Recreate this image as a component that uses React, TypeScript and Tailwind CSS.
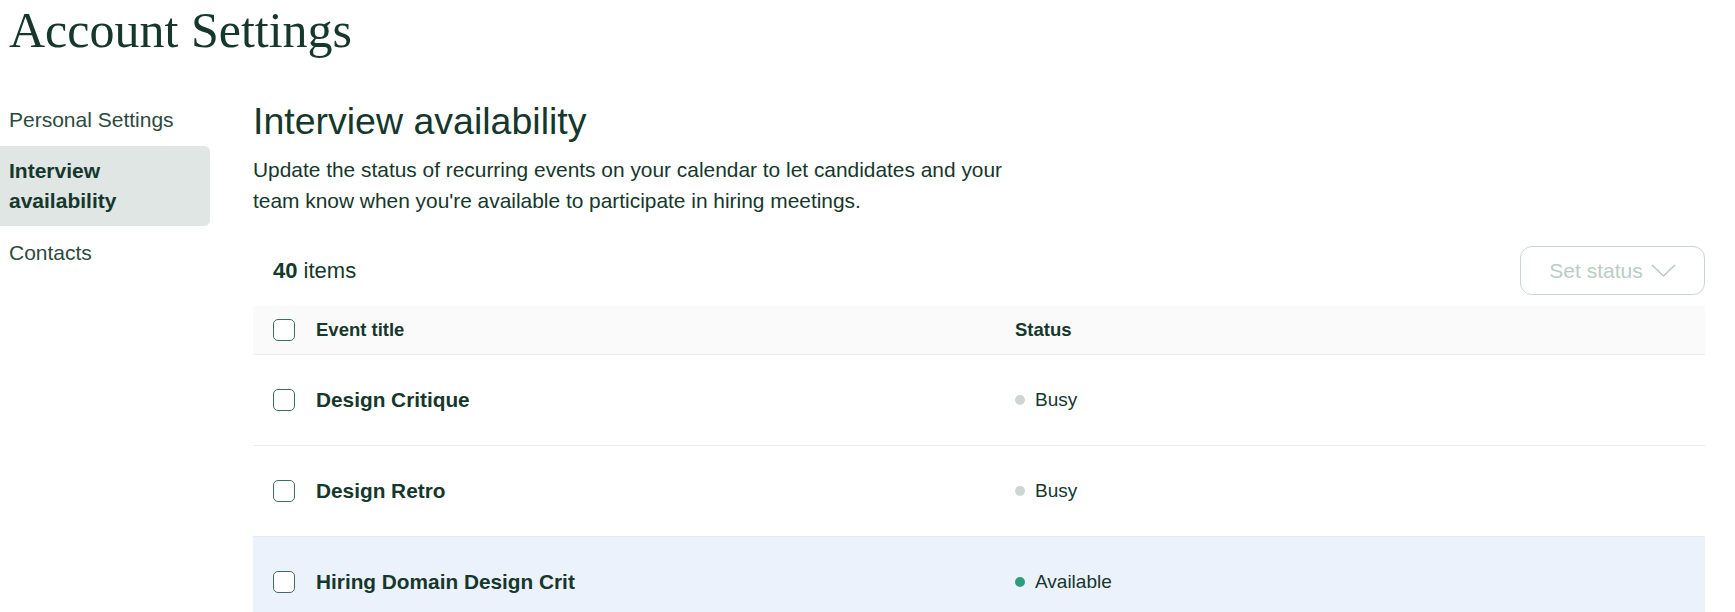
import { ChevronDown } from 'lucide-react';

type EventRow = {
  title: string;
  status: 'Busy' | 'Available';
  highlighted?: boolean;
};

const rows: EventRow[] = [
  { title: 'Design Critique', status: 'Busy' },
  { title: 'Design Retro', status: 'Busy' },
  { title: 'Hiring Domain Design Crit', status: 'Available', highlighted: true },
];

function Checkbox() {
  return (
    <span className="block size-[22px] shrink-0 rounded-[5px] border-[1.5px] border-[#3f6e5f] bg-white" />
  );
}

function StatusCell({ status }: { status: EventRow['status'] }) {
  const available = status === 'Available';
  return (
    <div className="flex items-center gap-[10px] text-[19px]">
      <span
        className={`size-[10px] rounded-full ${available ? 'bg-[#2e9d7c]' : 'bg-[#cfd5d3]'}`}
      />
      <span>{status}</span>
    </div>
  );
}

export default function App() {
  return (
    <div className="min-h-screen bg-white font-['Liberation_Sans',Arial,sans-serif] text-[#15372c]">
      <h1 className="h-[60px] pl-[9px] font-['Liberation_Serif',serif] text-[50px] leading-[60px]">
        Account Settings
      </h1>

      <div className="mt-[36px] flex">
        <nav className="flex w-[210px] shrink-0 flex-col text-[21px]">
          <a className="flex h-[48px] items-center pl-[9px] text-[#2c4a3f]">Personal Settings</a>
          <a className="mt-[2px] rounded-r-[6px] bg-[#dfe6e3] py-[10px] pr-[9px] pl-[9px] leading-[30px] font-bold">
            Interview availability
          </a>
          <a className="mt-[3px] flex h-[48px] items-center pl-[9px] text-[#2c4a3f]">Contacts</a>
        </nav>

        <main className="ml-[43px] flex-1 pt-[3px] pr-[30px]">
          <h2 className="h-[44px] text-[37.5px] leading-[44px]">Interview availability</h2>
          <p className="mt-[11px] w-[770px] text-[20.9px] leading-[31px]">
            Update the status of recurring events on your calendar to let candidates and your team
            know when you're available to participate in hiring meetings.
          </p>

          <div className="mt-[30px] flex h-[49px] items-center justify-between pl-[20px]">
            <div className="text-[22px]">
              <span className="font-bold">40</span> items
            </div>
            <button className="flex h-[49px] w-[185px] items-center justify-center gap-[8px] rounded-[12px] border border-[#c8d6d0] bg-white text-[21px] text-[#b9cdc5]">
              Set status
              <svg width="25" height="13" viewBox="0 0 25 13" fill="none">
                <polyline
                  points="1,1 12.5,12 24,1"
                  stroke="#b9cdc5"
                  strokeWidth="1.6"
                  strokeLinejoin="round"
                />
              </svg>
            </button>
          </div>

          <div className="mt-[11px]">
            <div className="grid h-[49px] grid-cols-[742px_1fr] items-center border-b border-[#ebebeb] bg-[#fafafa] pl-[20px] text-[18.5px] font-bold">
              <div className="flex items-center gap-[21px]">
                <Checkbox />
                <span>Event title</span>
              </div>
              <div>Status</div>
            </div>
            {rows.map((row) => (
              <div
                key={row.title}
                className={`grid h-[91px] grid-cols-[742px_1fr] items-center border-b border-[#ebebeb] pl-[20px] ${row.highlighted ? 'bg-[#ecf2fc]' : 'bg-white'}`}
              >
                <div className="flex items-center gap-[21px]">
                  <Checkbox />
                  <span className="text-[20.8px] font-bold">{row.title}</span>
                </div>
                <StatusCell status={row.status} />
              </div>
            ))}
          </div>
        </main>
      </div>
    </div>
  );
}
